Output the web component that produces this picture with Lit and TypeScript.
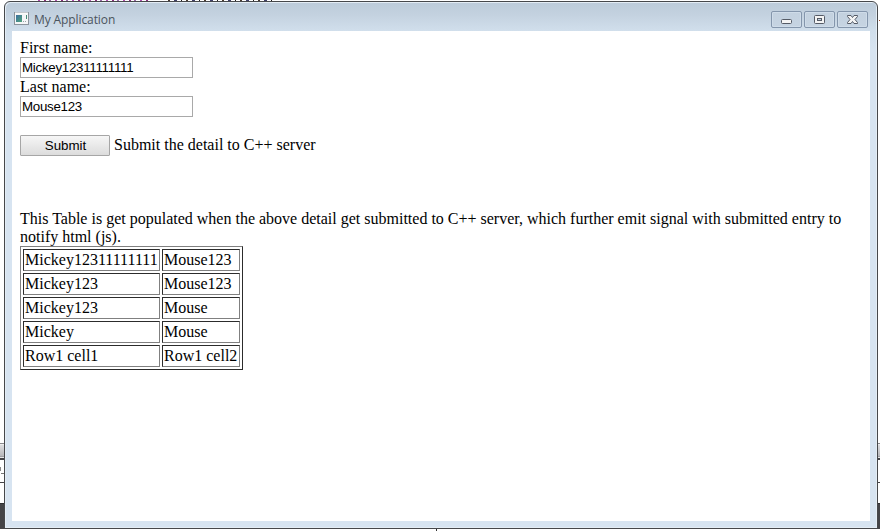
import { LitElement, html, css, svg } from "lit";
import { customElement, state } from "lit/decorators.js";

@customElement("app-root")
export class AppRoot extends LitElement {
  @state() private rows = [
    ["Mickey12311111111", "Mouse123"],
    ["Mickey123", "Mouse123"],
    ["Mickey123", "Mouse"],
    ["Mickey", "Mouse"],
    ["Row1 cell1", "Row1 cell2"],
  ];

  static styles = css`
    :host { display: block; position: relative; width: 880px; height: 531px; overflow: hidden; background: #fff;
      font: 16px/18px "Liberation Serif", "Times New Roman", serif; color: #000; box-sizing: border-box; padding: 1px 2px 2px 4px; }
    * { box-sizing: border-box; }
    .behind { position: absolute; left: 0; top: 443px; width: 880px; height: 86px;
      background: linear-gradient(#88888c 0 1px, #eee 1px 2px, #dedee0 2px, #b8b8bb 13px, #858588 14px, #e8e8e8 14px 15px, #444447 15px 17px, #fff 17px 39px, #444447 39px 40px, #fff 40px 60px, #2e2e30 60px 61px, #444447 61px); }
    .marks { position: absolute; left: 38px; top: 0; width: 112px; height: 1px;
      background: repeating-linear-gradient(90deg, #b050b0 0 2px, #fff 2px 6px, #8b307e 6px 8px, #fff 8px 11px, #9a68a8 11px 13px, #fff 13px 17px); }
    .marks.dark { left: 168px; width: 107px;
      background: repeating-linear-gradient(90deg, #4a3c30 0 2px, #fff 2px 6px, #40406a 6px 9px, #fff 9px 13px, #222 13px 14px, #fff 14px 18px); }
    .tick { position: absolute; left: 436px; top: 529px; width: 1px; height: 2px; background: #333; }
    .dot { position: absolute; left: 879px; top: 20px; width: 1px; height: 1px; background: #a54a2a; }
    .speck { position: absolute; left: 0; top: 467px; width: 1px; height: 4px; background: #8a8a8a; box-shadow: 2px 6px 0 -1px #555, 1px 0 0 -1px #aaa; }
    .speck.low { left: 1px; top: 473px; width: 3px; height: 1px; background: #777; box-shadow: none; }
    .window { position: relative; width: 874px; height: 528px; border: 1px solid #46484b; border-radius: 6px 6px 0 0;
      background: linear-gradient(#bccbda 0, #c3d1df 12px, #d0deeb 28px, #d7e4f1 48px, #d7e4f1);
      box-shadow: inset 1px 1px 0 #e4edf5, inset -1px -1px 0 #e4edf5; display: flex; flex-direction: column; padding: 0 7px 7px; }
    .bar { height: 29px; flex: none; display: flex; align-items: flex-start; }
    .icon { margin: 10px 0 0 2px; display: block; }
    .title { margin: 9px auto 0 5px; font: 12px/18px "Open Sans", sans-serif; color: #4b545d; letter-spacing: -0.1px; white-space: nowrap; }
    .controls { display: flex; gap: 2px; padding-top: 9px; margin-right: 2px; }
    .control { width: 31px; height: 17px; border: 1px solid #8496ac; border-radius: 2px; box-shadow: inset 0 0 0 1px #cfdce9;
      background: linear-gradient(#c3d1df, #c6d4e2); display: flex; }
    .control svg { display: block; }
    .page { flex: 1; background: #fff; padding: 8px 8px 0; margin: 0; min-height: 0; }
    .label { height: 18px; }
    .field { display: block; width: 173px; height: 21px; border: 1px solid #a9a9a9; padding: 1px; margin: 0; background: #fff; color: #000;
      font: 13.333px/17px "Liberation Sans", Arial, sans-serif; letter-spacing: -0.28px; outline: none; border-radius: 0; }
    .submit-row { display: flex; gap: 4px; height: 21px; margin-top: 18px; line-height: 20px; }
    .submit { width: 90px; height: 21px; border: 1px solid #a6a6a6; border-radius: 1px; padding: 0 0 0 1px; color: #000;
      background: linear-gradient(#f6f6f6, #dcdcdc); font: 13.333px/19px "Liberation Sans", Arial, sans-serif; text-align: center; }
    .note { margin: 54px 0 0; }
    table { table-layout: fixed; width: 223px; border: 1px solid; border-color: #808080 #2c2c2c #2c2c2c #808080; border-spacing: 2px; }
    td { border: 1px solid; border-color: #2c2c2c #808080 #808080 #2c2c2c; padding: 1px; height: 22px; white-space: nowrap; }
    td:first-child { width: 137px; }
  `;

  private control(name: string, glyph: unknown) {
    return html`<div class="control" role="button" aria-label=${name}>
      <svg width="29" height="15" viewBox="0 0 29 15">${glyph}</svg>
    </div>`;
  }

  render() {
    return html`
      <div class="behind"></div>
      <div class="speck"></div>
      <div class="speck low"></div>
      <div class="marks"></div>
      <div class="marks dark"></div>
      <div class="tick"></div>
      <div class="dot"></div>
      <div class="window">
        <div class="bar">
          <svg class="icon" width="15" height="13" viewBox="0 0 15 13">
            <defs><linearGradient id="g" x2="1" y2="1"><stop stop-color="#3e6fa0"/><stop offset="1" stop-color="#4fa57b"/></linearGradient></defs>
            <rect x=".5" y=".5" width="14" height="12" fill="#f5f6f7" stroke="#8b949c"/>
            <path d="M1 1h13" stroke="#fff"/>
            <rect x="2" y="3" width="6" height="7" fill="url(#g)"/>
            <rect x="12" y="3" width="1" height="4" fill="#458b76"/>
            <path d="M9 9.5h1m1 0h1" stroke="#9ca4a9"/>
          </svg>
          <span class="title">My Application</span>
          <div class="controls">
            ${this.control("Minimize", svg`<rect x="9.500" y="7.500" width="10" height="4" rx="1" fill="#f4f4f4" stroke="#555b66"/>`)}
            ${this.control("Maximize", svg`<rect x="9.500" y="3.500" width="10" height="8" rx="1" fill="#f4f4f4" stroke="#555b66"/><rect x="12.500" y="6.500" width="4" height="2" fill="#c3d1df" stroke="#555b66"/>`)}
            ${this.control("Close", svg`<path d="M9.500 3.500h3.500l1.500 2 1.500-2h3.500v1l-2.500 3 2.500 3v1h-3.500l-1.500-2-1.500 2h-3.500v-1l2.500-3-2.500-3z" fill="#f4f4f4" stroke="#555b66"/>`)}
          </div>
        </div>
        <div class="page">
          <div class="label">First name:</div>
          <input class="field" .value=${"Mickey12311111111"} />
          <div class="label">Last name:</div>
          <input class="field" .value=${"Mouse123"} />
          <div class="submit-row">
            <button class="submit">Submit</button>
            <span>Submit the detail to C++ server</span>
          </div>
          <p class="note">This Table is get populated when the above detail get submitted to C++ server, which further emit signal with submitted entry to notify html (js).</p>
          <table>
            <tbody>
              ${this.rows.map((r) => html`<tr>${r.map((c) => html`<td>${c}</td>`)}</tr>`)}
            </tbody>
          </table>
        </div>
      </div>
    `;
  }
}
